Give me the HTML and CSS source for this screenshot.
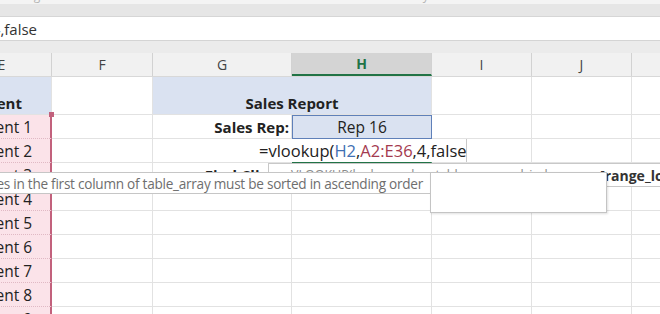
FILE: index.html
```html
<!DOCTYPE html>
<html>
  <head>
    <meta charset="utf-8" />
    <link rel="stylesheet" href="styles.css">
  </head>
  <body>
    <div class="ribbon">
      <span class="group g1">Alignment</span>
      <span class="group g2">Number</span>
      <span class="group g3">Styles</span>
    </div>
    <div class="band"></div>
    <div class="fx">
      <div class="fx-text">=vlookup(H2,A2:E36,4,false</div>
    </div>
    <div class="gap"></div>

    <div class="sheet">
      <div class="row head">
        <div class="hd">E</div>
        <div class="hd">F</div>
        <div class="hd">G</div>
        <div class="hd active">H</div>
        <div class="hd">I</div>
        <div class="hd">J</div>
        <div class="hd">K</div>
      </div>
      <div class="row tall">
        <div class="c blue b client">Client</div>
        <div class="c"></div>
        <div class="c blue b ctr span2">Sales Report</div>
        <div class="c"></div>
        <div class="c"></div>
        <div class="c"></div>
      </div>
      <div class="row">
        <div class="c pink client range-top">Client 1</div>
        <div class="c"></div>
        <div class="c b r">Sales Rep:</div>
        <div class="c blue ctr ref">Rep 16</div>
        <div class="c"></div>
        <div class="c"></div>
        <div class="c"></div>
      </div>
      <div class="row">
        <div class="c pink client">Client 2</div>
        <div class="c"></div>
        <div class="c"></div>
        <div class="c cur"></div>
        <div class="c"></div>
        <div class="c"></div>
        <div class="c"></div>
      </div>
      <div class="row">
        <div class="c pink client">Client 3</div>
        <div class="c"></div>
        <div class="c b r">Find Client:</div>
        <div class="c"></div>
        <div class="c"></div>
        <div class="c"></div>
        <div class="c"></div>
      </div>
      <div class="row">
        <div class="c pink client">Client 4</div>
        <div class="c"></div><div class="c"></div><div class="c"></div>
        <div class="c"></div><div class="c"></div><div class="c"></div>
      </div>
      <div class="row">
        <div class="c pink client">Client 5</div>
        <div class="c"></div><div class="c"></div><div class="c"></div>
        <div class="c"></div><div class="c"></div><div class="c"></div>
      </div>
      <div class="row">
        <div class="c pink client">Client 6</div>
        <div class="c"></div><div class="c"></div><div class="c"></div>
        <div class="c"></div><div class="c"></div><div class="c"></div>
      </div>
      <div class="row">
        <div class="c pink client">Client 7</div>
        <div class="c"></div><div class="c"></div><div class="c"></div>
        <div class="c"></div><div class="c"></div><div class="c"></div>
      </div>
      <div class="row">
        <div class="c pink client">Client 8</div>
        <div class="c"></div><div class="c"></div><div class="c"></div>
        <div class="c"></div><div class="c"></div><div class="c"></div>
      </div>
      <div class="row">
        <div class="c pink client">Client 9</div>
        <div class="c"></div><div class="c"></div><div class="c"></div>
        <div class="c"></div><div class="c"></div><div class="c"></div>
      </div>

      <!-- in-cell editor and the popups that hang under it -->
      <div class="editor">=vlookup(<span class="ref-h">H2</span>,<span class="ref-a">A2:E36</span>,4,false</div>
      <div class="hint">VLOOKUP(lookup_value, table_array, col_index_num, <b>[range_lookup]</b>)</div>
      <div class="tip"><span>Lookup values in the first column of table_array must be sorted in ascending order</span></div>
      <div class="list"></div>
    </div>
  </body>
</html>
```

FILE: styles.css
```css
html,
body {
  margin: 0;
  padding: 0;
  width: 660px;
  height: 314px;
  overflow: hidden;
  background: #ffffff;
  font-family: "Open Sans", "Noto Sans", sans-serif;
  color: #222222;
}
.ribbon {
  height: 4px;
  background: #f4f4f4;
  position: relative;
  overflow: hidden;
}
.group {
  position: absolute;
  top: -13px;
  font-size: 12px;
  color: #b4b4b4;
}
.g1 { left: 20px; }
.g2 { left: 140px; }
.g3 { left: 412px; }
.band {
  height: 12px;
  background: #e6e6e6;
  border-bottom: 1px solid #d6d6d6;
}
.fx {
  height: 23px;
  background: #ffffff;
  border-bottom: 1px solid #d4d4d4;
  display: flex;
  align-items: center;
}
.fx-text {
  width: 37px;
  display: flex;
  justify-content: flex-end;
  white-space: nowrap;
  font-size: 15px;
  color: #333333;
}
.gap {
  height: 12px;
  background: #ebebeb;
}
.sheet {
  position: relative;
  margin-left: -48px;
}
.row {
  display: grid;
  grid-template-columns: 100px 101px 139px 140px 100px 100px 100px;
  height: 24px;
}
.row.tall {
  height: 38px;
}
.head {
  background: #f1f1f1;
  border-bottom: 1px solid #d8d8d8;
  box-sizing: border-box;
}
.hd {
  display: flex;
  align-items: center;
  justify-content: center;
  font-size: 14px;
  color: #444444;
  border-right: 1px solid #d2d2d2;
}
.hd.active {
  background: #d4d4d4;
  color: #217346;
  font-weight: 700;
  border-bottom: 2px solid #217346;
}
.c {
  box-sizing: border-box;
  border-right: 1px solid #e2e2e2;
  border-bottom: 1px solid #e2e2e2;
  display: flex;
  align-items: flex-end;
  padding: 0 4px 2px;
  font-size: 15.5px;
  line-height: 18px;
  white-space: nowrap;
}
.b {
  font-weight: 700;
  font-size: 15px;
}
.r { justify-content: flex-end; }
.r.b { padding-right: 2px; }
.ctr { justify-content: center; }
.span2 { grid-column: span 2; }
.blue { background: #dae2f1; }
.pink {
  background: #fbe3e9;
  border-right: 2px solid #c2617c;
  border-bottom: 1px dotted #e0b9c4;
}
.client {
  padding-left: 26px;
}
.range-top {
  position: relative;
}
.range-top::after {
  content: "";
  position: absolute;
  right: -4px;
  top: -3px;
  width: 5px;
  height: 5px;
  background: #c2617c;
}
.ref {
  border: 1px solid #5f80b9;
}
.cur {
  border-bottom: 2px solid #217346;
}
.editor {
  position: absolute;
  left: 306px;
  top: 86px;
  width: 209px;
  height: 23px;
  background: #ffffff;
  border-right: 1px solid #c9c9c9;
  box-sizing: border-box;
  display: flex;
  align-items: flex-end;
  padding: 0 0 2px 1px;
  font-size: 16.5px;
  line-height: 18px;
  white-space: nowrap;
}
.ref-h { color: #3f70b3; }
.ref-a { color: #a43a4f; }
.hint {
  position: absolute;
  left: 316px;
  top: 110px;
  width: 440px;
  height: 24px;
  background: #ffffff;
  border: 1px solid #c8c8c8;
  box-sizing: border-box;
  padding: 1px 6px 0 22px;
  font-size: 12.5px;
  line-height: 18px;
  color: #8a8a8a;
  white-space: nowrap;
}
.hint b {
  color: #333333;
  font-size: 14px;
  position: relative;
  top: 2px;
}
.tip {
  position: absolute;
  left: 0;
  top: 119px;
  width: 480px;
  height: 22px;
  background: #ffffff;
  border: 1px solid #c6c6c6;
  box-sizing: border-box;
  display: flex;
  justify-content: flex-end;
  align-items: center;
  padding-right: 8px;
  font-size: 13.6px;
  letter-spacing: -0.26px;
  color: #6e6e6e;
  white-space: nowrap;
}
.list {
  position: absolute;
  left: 478px;
  top: 119px;
  width: 177px;
  height: 41px;
  background: #ffffff;
  border: 1px solid #c4c4c4;
  box-sizing: border-box;
  box-shadow: 1px 1px 2px rgba(0, 0, 0, 0.12);
}
```
